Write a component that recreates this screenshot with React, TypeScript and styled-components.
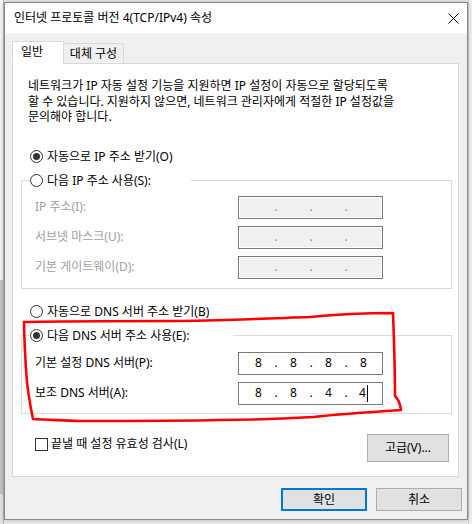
import React from 'react';
import styled, { createGlobalStyle } from 'styled-components';

const Global = createGlobalStyle`
  html, body { margin: 0; padding: 0; }
  body {
    width: 472px; height: 524px; overflow: hidden;
    background: #e9e9e9;
    font-family: "Noto Sans", "Noto Sans CJK KR", sans-serif;
    font-size: 12px; color: #000;
  }
`;

const Page = styled.div`
  position: relative;
  width: 472px; height: 524px;
  display: grid;
  grid-template-columns: 4px 464px 4px;
  grid-template-rows: 2px 518px 4px;
  background: #ededed;
`;

const LeftStrip = styled.div`
  grid-column: 1; grid-row: 1 / 4;
  background: linear-gradient(to bottom, #f6f6f6 0, #f6f6f6 280px, #c4c4c4 280px, #c4c4c4 494px, #e4e4e4 494px);
  border-right: 1px solid #b8b8b8;
  box-sizing: border-box;
`;

const RightStrip = styled.div`
  grid-column: 3; grid-row: 1 / 4;
  background: #f2f2f2;
  border-left: 1px solid #d0d0d0;
  box-sizing: border-box;
`;

const Window = styled.div`
  grid-column: 2; grid-row: 2;
  width: 464px; height: 518px; box-sizing: border-box;
  border: 1px solid #8a8a8a;
  background: #f0f0f0;
  display: flex; flex-direction: column;
  box-shadow: 0 0 5px rgba(0,0,0,0.25);
  position: relative; z-index: 1;
`;

const TitleBar = styled.div`
  height: 30px; flex: none;
  background: #fff;
  display: flex; align-items: center; justify-content: space-between;
  padding: 0 8px 0 9px;
  line-height: 16px;
`;

const Body = styled.div`
  flex: 1;
  display: flex; flex-direction: column;
  padding: 8px 0 0 7px;
`;

const TabStrip = styled.div`
  display: flex; align-items: flex-end;
  height: 23px; margin-bottom: -1px;
  position: relative; z-index: 1;
`;

const Tab = styled.div<{ $active?: boolean; $w: number }>`
  box-sizing: border-box;
  width: ${p => p.$w}px;
  height: ${p => (p.$active ? 23 : 21)}px;
  border: 1px solid #d9d9d9;
  border-bottom-color: ${p => (p.$active ? '#fff' : '#d9d9d9')};
  background: ${p => (p.$active ? '#fff' : '#f0f0f0')};
  margin-left: ${p => (p.$active ? 0 : -1)}px;
  display: flex; align-items: center;
  justify-content: ${p => (p.$active ? 'flex-start' : 'center')};
  padding-left: ${p => (p.$active ? 8 : 0)}px;
  padding-bottom: ${p => (p.$active ? 1 : 0)}px;
  line-height: 16px;
`;

const Panel = styled.div`
  box-sizing: border-box;
  width: 447px; height: 414px;
  border: 1px solid #d9d9d9;
  background: #fff;
  display: flex; flex-direction: column;
`;

const Para = styled.p`
  margin: 14px 0 0 15px;
  line-height: 15.5px;
  white-space: nowrap;
`;

const RadioRow = styled.label<{ $top?: number; $disabled?: boolean }>`
  display: flex; align-items: center; gap: 4px;
  height: 16px; line-height: 16px;
  margin: ${p => p.$top ?? 0}px 0 0 17px;
  color: ${p => (p.$disabled ? '#a0a0a0' : '#000')};
`;

const Circle = styled.span<{ $on?: boolean }>`
  box-sizing: border-box;
  width: 13px; height: 13px; flex: none;
  border: 1px solid #333;
  border-radius: 50%;
  background: #fff;
  display: grid; place-items: center;
  &::after {
    content: '';
    width: 7px; height: 7px; border-radius: 50%;
    background: ${p => (p.$on ? '#333' : 'transparent')};
  }
`;

const Group = styled.fieldset<{ $top: number; $pb: number }>`
  box-sizing: border-box;
  margin: ${p => p.$top}px 0 0 8px;
  width: 431px;
  padding: 0 0 ${p => p.$pb}px 0;
  border: 1px solid #dcdcdc;
  min-inline-size: 0;
`;

const Legend = styled.legend<{ $w: number }>`
  box-sizing: border-box;
  width: ${p => p.$w}px;
  margin-left: 8px;
  padding: 0;
  height: 16px; line-height: 16px;
  display: flex; align-items: center; gap: 4px;
  background: #fff;
`;

const Fields = styled.div<{ $top: number }>`
  display: grid;
  grid-template-columns: 203px 145px;
  row-gap: 7px;
  align-items: center;
  padding-left: 13px;
  margin-top: ${p => p.$top}px;
`;

const FieldLabel = styled.span<{ $disabled?: boolean }>`
  color: ${p => (p.$disabled ? '#a0a0a0' : '#000')};
  line-height: 16px;
  white-space: nowrap;
`;

const IpBox = styled.div<{ $disabled?: boolean }>`
  box-sizing: border-box;
  width: 145px; height: 23px;
  border: 1px solid #7a7a7a;
  background: ${p => (p.$disabled ? '#f0f0f0' : '#fff')};
  box-shadow: ${p => (p.$disabled ? 'inset 0 0 0 1px #fff' : 'none')};
  display: flex; align-items: center;
  padding-left: 5px;
  line-height: 16px;
`;

const Octet = styled.span`
  width: 29px; text-align: center;
  display: flex; justify-content: center; align-items: center;
`;

const Dot = styled.span<{ $disabled?: boolean }>`
  width: 6px; text-align: center;
  color: ${p => (p.$disabled ? '#8a8a8a' : '#000')};
`;

const Caret = styled.span`
  display: inline-block;
  width: 1px; height: 17px;
  background: #000;
  margin-left: 1px;
`;

const BottomRow = styled.div`
  display: flex; justify-content: space-between; align-items: flex-start;
  margin: 20px 9px 0 22px;
`;

const CheckRow = styled.label`
  display: flex; align-items: center; gap: 3px;
  margin-top: 4px;
  height: 13px; line-height: 16px;
`;

const Box = styled.span`
  box-sizing: border-box;
  width: 13px; height: 13px;
  border: 1px solid #333;
  background: #fff;
`;

const Button = styled.button<{ $w: number; $h: number; $default?: boolean }>`
  box-sizing: border-box;
  width: ${p => p.$w}px; height: ${p => p.$h}px;
  background: #e1e1e1;
  border: ${p => (p.$default ? '2px solid #0078d7' : '1px solid #adadad')};
  font: inherit; color: #000;
  padding: 0; line-height: 16px;
  display: flex; align-items: center; justify-content: center;
`;

const Footer = styled.div`
  display: flex; justify-content: flex-end; gap: 9px;
  margin-top: 11px;
  padding-right: 5px;
`;

const Overlay = styled.svg`
  position: absolute; left: 0; top: 0;
  pointer-events: none;
  z-index: 2;
`;

function IpField({ values, disabled, caret }: { values?: string[]; disabled?: boolean; caret?: boolean }) {
  const v = values ?? ['', '', '', ''];
  return (
    <IpBox $disabled={disabled}>
      {v.map((x, i) => (
        <React.Fragment key={i}>
          <Octet>
            {x}
            {caret && i === 3 ? <Caret /> : null}
          </Octet>
          {i < 3 ? <Dot $disabled={disabled}>.</Dot> : null}
        </React.Fragment>
      ))}
    </IpBox>
  );
}

export default function App() {
  return (
    <>
      <Global />
      <Page>
        <LeftStrip />
        <Window>
          <TitleBar>
            <span>인터넷 프로토콜 버전 4(TCP/IPv4) 속성</span>
            <svg width="11" height="11" viewBox="0 0 11 11">
              <path d="M0.5 0.5 L10.5 10.5 M10.5 0.5 L0.5 10.5" stroke="#000" strokeWidth="1" fill="none" />
            </svg>
          </TitleBar>
          <Body>
            <TabStrip>
              <Tab $active $w={52}>일반</Tab>
              <Tab $w={61}>대체 구성</Tab>
            </TabStrip>
            <Panel>
              <Para>
                네트워크가 IP 자동 설정 기능을 지원하면 IP 설정이 자동으로 할당되도록
                <br />할 수 있습니다. 지원하지 않으면, 네트워크 관리자에게 적절한 IP 설정값을
                <br />문의해야 합니다.
              </Para>
              <RadioRow $top={24}>
                <Circle $on />
                자동으로 IP 주소 받기(O)
              </RadioRow>
              <Group $top={8} $pb={9}>
                <Legend $w={161}>
                  <Circle />
                  다음 IP 주소 사용(S):
                </Legend>
                <Fields $top={7}>
                  <FieldLabel $disabled>IP 주소(I):</FieldLabel>
                  <IpField disabled />
                  <FieldLabel $disabled>서브넷 마스크(U):</FieldLabel>
                  <IpField disabled />
                  <FieldLabel $disabled>기본 게이트웨이(D):</FieldLabel>
                  <IpField disabled />
                </Fields>
              </Group>
              <RadioRow $top={15}>
                <Circle />
                자동으로 DNS 서버 주소 받기(B)
              </RadioRow>
              <Group $top={8} $pb={8}>
                <Legend $w={203}>
                  <Circle $on />
                  다음 DNS 서버 주소 사용(E):
                </Legend>
                <Fields $top={8}>
                  <FieldLabel>기본 설정 DNS 서버(P):</FieldLabel>
                  <IpField values={['8', '8', '8', '8']} />
                  <FieldLabel>보조 DNS 서버(A):</FieldLabel>
                  <IpField values={['8', '8', '4', '4']} caret />
                </Fields>
              </Group>
              <BottomRow>
                <CheckRow>
                  <Box />
                  끝낼 때 설정 유효성 검사(L)
                </CheckRow>
                <Button $w={82} $h={28}>고급(V)...</Button>
              </BottomRow>
            </Panel>
            <Footer>
              <Button $w={86} $h={23} $default>확인</Button>
              <Button $w={86} $h={23}>취소</Button>
            </Footer>
          </Body>
        </Window>
        <RightStrip />
        <Overlay width="472" height="524" viewBox="0 0 472 524">
          <path
            d="M24 322 C60 321 120 321 180 321 C240 320 280 318 310 317 C330 315 360 313 393 313 C394 340 395 370 395 396 C398 399 400 402 401 410 C370 412 340 414 313 417 C280 419 250 420 220 420 C180 421 120 421 80 421 C60 420 45 420 33 419 C30 405 27 385 26 370 C25 350 24 335 24 322 Z"
            fill="none"
            stroke="#ff0000"
            strokeWidth="2.6"
            strokeLinejoin="round"
            strokeLinecap="round"
          />
        </Overlay>
      </Page>
    </>
  );
}
